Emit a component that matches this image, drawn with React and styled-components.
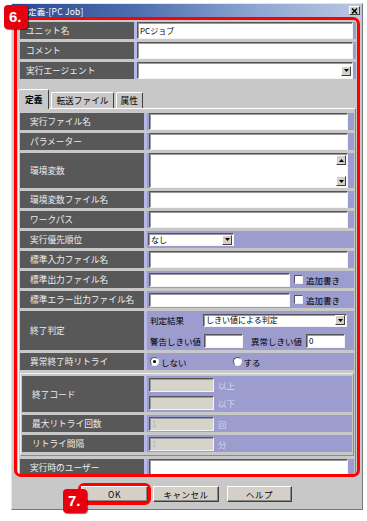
import React from "react";
import styled, { createGlobalStyle } from "styled-components";

const GlobalStyle = createGlobalStyle`
  body {
    margin: 0;
    background: #fff;
    font-family: "Noto Sans CJK JP", "Liberation Sans", sans-serif;
  }
`;

const Page = styled.div`
  position: relative;
  width: 367px;
  height: 521px;
  padding: 3px 0 0 11px;
  box-sizing: border-box;
`;

const Window = styled.div`
  width: 352px;
  height: 507px;
  box-sizing: border-box;
  background: #c8c8c8;
  border: 1px solid;
  border-color: #e6e6e6 #777 #777 #e6e6e6;
  display: flex;
  flex-direction: column;
`;

const TitleBar = styled.div`
  height: 13px;
  flex: none;
  display: flex;
  align-items: center;
  padding-left: 16px;
  background: linear-gradient(90deg, #2a4890 0%, #4d6eae 35%, #8ea6d2 70%, #bac8e2 100%);
  color: #fff;
  font-size: 8.5px;
  letter-spacing: 0.2px;
`;

const CloseBtn = styled.div`
  margin-left: auto;
  margin-right: 2px;
  width: 11px;
  height: 9px;
  box-sizing: border-box;
  background: #d4d0c8;
  border: 1px solid;
  border-color: #fff #404040 #404040 #fff;
  display: flex;
  align-items: center;
  justify-content: center;
`;

const Frame = styled.div`
  margin: 0 2px 0 2px;
  height: 460px;
  box-sizing: border-box;
  border: 3px solid #f00;
  border-radius: 7px;
  padding: 2px 1px 0 3px;
  overflow: hidden;
`;

const Row = styled.div`
  display: flex;
  height: ${(p) => p.$h || 17}px;
  margin-bottom: ${(p) => (p.$last ? 0 : 3)}px;
`;

const Label = styled.div`
  width: ${(p) => p.$w}px;
  flex: none;
  box-sizing: border-box;
  padding-left: ${(p) => p.$pl}px;
  background: #585858;
  color: #ededed;
  font-size: 8.7px;
  display: flex;
  align-items: center;
  white-space: nowrap;
`;

const Value = styled.div`
  flex: 1;
  min-width: 0;
  background: #9c9cce;
  border-left: 3px solid #b8b8e6;
  padding: 0 ${(p) => p.$pr}px 0 ${(p) => p.$pl}px;
  display: flex;
  flex-direction: column;
  justify-content: ${(p) => p.$justify || "center"};
  gap: ${(p) => p.$gap || 0}px;
`;

const Line = styled.div`
  display: flex;
  align-items: center;
  font-size: 8.5px;
  color: #000;
  white-space: nowrap;
`;

const Box = styled.div`
  width: ${(p) => (p.$w ? `${p.$w}px` : "auto")};
  flex: ${(p) => (p.$w ? "none" : "1")};
  height: ${(p) => p.$h || 14}px;
  box-sizing: border-box;
  background: ${(p) => (p.$disabled ? "#d6d3cb" : "#fff")};
  border: 1px solid;
  border-color: #555 #f4f4f4 #f4f4f4 #555;
  box-shadow: inset 1px 1px 0 #9a9a9a;
  margin-left: ${(p) => p.$ml || 0}px;
  padding-left: 2px;
  display: flex;
  align-items: ${(p) => (p.$area ? "stretch" : "center")};
  font-size: 8px;
  color: ${(p) => (p.$disabled ? "#b0b0b0" : "#000")};
  overflow: hidden;
`;

const BoxText = styled.span`
  flex: 1;
  line-height: 12px;
`;

const ArrowBtn = styled.div`
  width: 10px;
  height: 10px;
  flex: none;
  box-sizing: border-box;
  margin-right: 1px;
  background: #d4d0c8;
  border: 1px solid;
  border-color: #fff #404040 #404040 #fff;
  display: flex;
  align-items: center;
  justify-content: center;
`;

const ScrollCol = styled.div`
  display: flex;
  flex-direction: column;
  justify-content: space-between;
  padding: 1px 0;
`;

const Check = styled.div`
  width: 9px;
  height: 9px;
  box-sizing: border-box;
  background: #fff;
  border: 1px solid;
  border-color: #555 #eee #eee #555;
  margin: 0 3px 0 4px;
`;

const Radio = styled.div`
  width: 9px;
  height: 9px;
  box-sizing: border-box;
  border-radius: 50%;
  background: #fff;
  border: 1px solid;
  border-color: #555 #eee #eee #555;
  margin-right: 2px;
  display: flex;
  align-items: center;
  justify-content: center;
  &::after {
    content: "";
    width: 3px;
    height: 3px;
    border-radius: 50%;
    background: ${(p) => (p.$on ? "#000" : "transparent")};
  }
`;

const Unit = styled.span`
  margin-left: 4px;
  color: #d4d4ec;
  font-size: 8.5px;
`;

const Gap = styled.span`
  width: ${(p) => p.$w}px;
  flex: none;
`;

const TabStrip = styled.div`
  display: flex;
  align-items: flex-end;
  gap: 2px;
  height: 19px;
  margin: 10px 0 0 -2px;
  position: relative;
  z-index: 1;
`;

const Tab = styled.div`
  height: ${(p) => (p.$active ? 20 : 16)}px;
  box-sizing: border-box;
  padding: 0 ${(p) => (p.$active ? 6 : 4)}px;
  margin-bottom: ${(p) => (p.$active ? -1 : 0)}px;
  background: #c8c8c8;
  border: 1px solid;
  border-color: #fff #404040 transparent #fff;
  border-bottom: none;
  border-radius: 2px 2px 0 0;
  display: flex;
  align-items: center;
  font-size: 8.7px;
  font-weight: ${(p) => (p.$active ? 700 : 400)};
  color: #000;
`;

const Panel = styled.div`
  margin-left: -2px;
  border-top: 1px solid #fff;
  border-left: 1px solid #fff;
  border-right: 1px solid #808080;
  padding: 4px 1px 0 1px;
`;

const Group = styled.div`
  border: 1px solid;
  border-color: #efefef #8a8a8a #8a8a8a #efefef;
  padding: 2px 1px 3px 1px;
  margin-bottom: 3px;
`;

const ButtonBar = styled.div`
  display: flex;
  align-items: center;
  margin-top: 6px;
  padding-left: 66px;
`;

const Highlight = styled.div`
  border: 3px solid #f00;
  border-radius: 6px;
  margin-right: 2px;
  display: flex;
`;

const Button = styled.button`
  width: ${(p) => p.$w || 66}px;
  height: 16px;
  padding: 0;
  margin-right: ${(p) => p.$mr || 0}px;
  background: #d4d0c8;
  border: 1px solid;
  border-color: #fff #404040 #404040 #fff;
  box-shadow: inset -1px -1px 0 #888;
  font-family: "Noto Sans CJK JP", sans-serif;
  font-size: 8.5px;
  color: #000;
  letter-spacing: 0.5px;
`;

const Badge = styled.div`
  position: absolute;
  left: ${(p) => p.$x}px;
  top: ${(p) => p.$y}px;
  width: 24px;
  height: 24px;
  box-sizing: border-box;
  padding: 2px 0 0 5px;
  background: #e8000e;
  border-radius: 4px;
  box-shadow: 1px 1px 1px rgba(0, 0, 0, 0.55);
  color: #fff;
  font-family: "Liberation Sans", sans-serif;
  font-weight: 700;
  font-size: 15px;
  line-height: 20px;
`;

const Tri = ({ up }) => (
  <svg width="5" height="3" viewBox="0 0 5 3">
    <path d={up ? "M0 3 L2.5 0 L5 3 Z" : "M0 0 L5 0 L2.5 3 Z"} fill="#000" />
  </svg>
);

const Select = ({ w, ml, text, h }) => (
  <Box $w={w} $ml={ml} $h={h || 13}>
    <BoxText>{text}</BoxText>
    <ArrowBtn>
      <Tri />
    </ArrowBtn>
  </Box>
);

const TopRow = ({ label, children }) => (
  <Row>
    <Label $w={114} $pl={6}>{label}</Label>
    <Value $pl={0} $pr={3}>{children}</Value>
  </Row>
);

const PRow = ({ label, h, w = 124, children, last, justify, gap }) => (
  <Row $h={h} $last={last}>
    <Label $w={w} $pl={10}>{label}</Label>
    <Value $pl={2} $pr={6} $justify={justify} $gap={gap}>{children}</Value>
  </Row>
);

export default function App() {
  return (
    <Page>
      <GlobalStyle />
      <Window>
        <TitleBar>
          定義-[PC Job]
          <CloseBtn>
            <svg width="7" height="6" viewBox="0 0 7 6">
              <path d="M1 0.5 L6 5.5 M6 0.5 L1 5.5" stroke="#000" strokeWidth="1.5" />
            </svg>
          </CloseBtn>
        </TitleBar>

        <Frame>
          <TopRow label="ユニット名">
            <Box>
              <BoxText>PCジョブ</BoxText>
            </Box>
          </TopRow>
          <TopRow label="コメント">
            <Box />
          </TopRow>
          <TopRow label="実行エージェント">
            <Select h={14} />
          </TopRow>

          <TabStrip>
            <Tab $active>定義</Tab>
            <Tab>転送ファイル</Tab>
            <Tab>属性</Tab>
          </TabStrip>

          <Panel>
            <PRow label="実行ファイル名">
              <Box />
            </PRow>
            <PRow label="パラメーター">
              <Box />
            </PRow>
            <PRow label="環境変数" h={35}>
              <Box $h={31} $area>
                <BoxText />
                <ScrollCol>
                  <ArrowBtn>
                    <Tri up />
                  </ArrowBtn>
                  <ArrowBtn>
                    <Tri />
                  </ArrowBtn>
                </ScrollCol>
              </Box>
            </PRow>
            <PRow label="環境変数ファイル名">
              <Box />
            </PRow>
            <PRow label="ワークパス">
              <Box />
            </PRow>
            <PRow label="実行優先順位">
              <Line>
                <Select w={86} ml={-1} text="なし" />
              </Line>
            </PRow>
            <PRow label="標準入力ファイル名">
              <Box />
            </PRow>
            <PRow label="標準出力ファイル名">
              <Line>
                <Box $w={141} />
                <Check />
                追加書き
              </Line>
            </PRow>
            <PRow label="標準エラー出力ファイル名">
              <Line>
                <Box $w={141} />
                <Check />
                追加書き
              </Line>
            </PRow>
            <PRow label="終了判定" h={39} gap={7}>
              <Line>
                <Gap $w={1} />
                判定結果
                <Gap $w={19} />
                <Select w={144} text="しきい値による判定" />
              </Line>
              <Line>
                <Gap $w={1} />
                警告しきい値
                <Box $w={39} $ml={3} />
                <Gap $w={8} />
                異常しきい値
                <Box $w={39} $ml={4}>
                  <BoxText>0</BoxText>
                </Box>
              </Line>
            </PRow>
            <PRow label="異常終了時リトライ">
              <Line>
                <Gap $w={1} />
                <Radio $on />
                しない
                <Gap $w={46} />
                <Radio />
                する
              </Line>
            </PRow>

            <Group>
              <PRow label="終了コード" h={36} w={122} justify="center" gap={4}>
                <Line>
                  <Box $w={65} $disabled />
                  <Unit>以上</Unit>
                </Line>
                <Line>
                  <Box $w={65} $disabled />
                  <Unit>以下</Unit>
                </Line>
              </PRow>
              <PRow label="最大リトライ回数" w={122}>
                <Line>
                  <Box $w={65} $disabled>
                    <BoxText>1</BoxText>
                  </Box>
                  <Unit>回</Unit>
                </Line>
              </PRow>
              <PRow label="リトライ間隔" w={122} last>
                <Line>
                  <Box $w={65} $disabled>
                    <BoxText>1</BoxText>
                  </Box>
                  <Unit>分</Unit>
                </Line>
              </PRow>
            </Group>

            <PRow label="実行時のユーザー" last>
              <Box />
            </PRow>
          </Panel>
        </Frame>

        <ButtonBar>
          <Highlight>
            <Button $w={67}>OK</Button>
          </Highlight>
          <Button $mr={8}>キャンセル</Button>
          <Button $w={65}>ヘルプ</Button>
        </ButtonBar>
      </Window>

      <Badge $x={4} $y={5}>6.</Badge>
      <Badge $x={63} $y={489}>7.</Badge>
    </Page>
  );
}
